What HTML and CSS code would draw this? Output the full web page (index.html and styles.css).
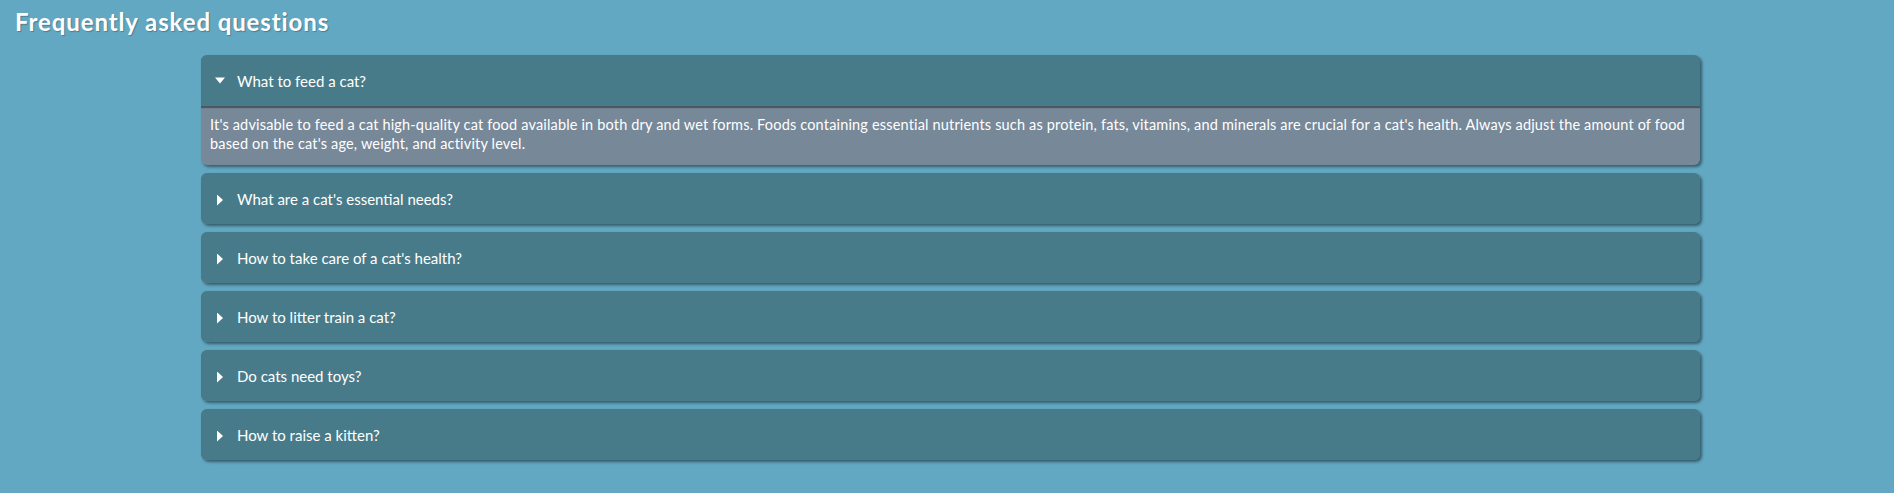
FILE: index.html
```html
<!DOCTYPE html>
<html lang="en">
<head>
<meta charset="utf-8">
<title>FAQ</title>
<link rel="stylesheet" href="styles.css">
</head>
<body>
<h1 class="title">Frequently asked questions</h1>
<div class="faq">
  <details class="item" open>
    <summary class="question">What to feed a cat?</summary>
    <p class="answer">It's advisable to feed a cat high-quality cat food available in both dry and wet forms. Foods containing essential nutrients such as protein, fats, vitamins, and minerals are crucial for a cat's health. Always adjust the amount of food based on the cat's age, weight, and activity level.</p>
  </details>
  <details class="item">
    <summary class="question">What are a cat's essential needs?</summary>
  </details>
  <details class="item">
    <summary class="question">How to take care of a cat's health?</summary>
  </details>
  <details class="item">
    <summary class="question">How to litter train a cat?</summary>
  </details>
  <details class="item">
    <summary class="question">Do cats need toys?</summary>
  </details>
  <details class="item">
    <summary class="question">How to raise a kitten?</summary>
  </details>
</div>
</body>
</html>
```

FILE: styles.css
```css
html {
  background: #62a8c2;
}
body {
  margin: 0;
  padding: 0 194px 20px 201px;
  font-family: "Lato", "Open Sans", sans-serif;
  color: #ffffff;
}
.title {
  margin: 0 0 0 -186px;
  padding-top: 8px;
  height: 55px;
  box-sizing: border-box;
  font-size: 24px;
  font-weight: 700;
  letter-spacing: 0.9px;
  line-height: 28px;
  text-shadow: 1px 1px 1px rgba(0, 0, 0, 0.25);
}
.faq {
  display: flex;
  flex-direction: column;
  gap: 8px;
}
.item {
  background: #778899;
  border-radius: 6px;
  box-shadow: 2px 2px 3px rgba(0, 0, 0, 0.45);
  overflow: hidden;
}
.question {
  background: #487b8a;
  height: 51px;
  box-sizing: border-box;
  padding: 0 15px 0 13px;
  display: flex;
  align-items: center;
  gap: 11px;
  list-style: none;
  font-size: 15px;
  cursor: pointer;
}
.question::-webkit-details-marker {
  display: none;
}
.question::before {
  content: "";
  width: 12px;
  height: 11px;
  flex: none;
  background-color: #ffffff;
  clip-path: polygon(3px 0, 9px 5.5px, 3px 11px);
  margin-top: 3px;
}
.item[open] .question::before {
  clip-path: polygon(1px 2px, 11px 2px, 6px 8px);
  margin-top: 1px;
}
.item[open] .question {
  box-shadow: 0 2px 1px rgba(0, 0, 0, 0.35);
  position: relative;
}
.answer {
  margin: 0;
  padding: 9px 10px 12px 9px;
  font-size: 14.5px;
  letter-spacing: 0.17px;
  line-height: 19px;
}
```
